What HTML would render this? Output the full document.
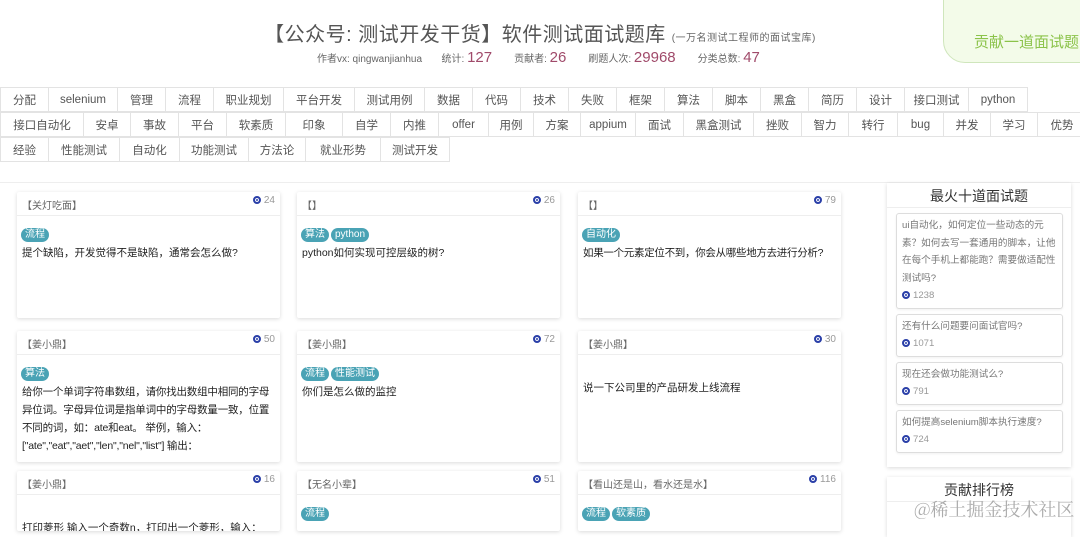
<!DOCTYPE html>
<html><head><meta charset="utf-8"><style>
*{margin:0;padding:0;box-sizing:border-box}
body{width:1080px;height:525px;overflow:hidden;background:#fff;font-family:"Liberation Sans","Noto Sans CJK SC",sans-serif;position:relative;color:#333}
.title{position:absolute;top:18px;left:0;width:1080px;text-align:center;font-size:20px;color:#555;letter-spacing:0.5px}
.title small{font-size:10px;color:#666;margin-left:6px}
.stats{position:absolute;top:49px;left:317px;font-size:10px;color:#666;white-space:nowrap}
.stats b{font-size:15px;color:#a04a6a;font-weight:normal;margin-right:22px}
.contrib{position:absolute;left:943px;top:-5px;width:150px;height:68px;background:#f3fbe9;border:1px solid #cfe6bc;border-radius:0 0 0 22px;color:#8bc34a;font-size:15px;padding:35px 0 0 30px}
.row{position:absolute;left:0;display:flex;height:25px}
.row div{border:1px solid #e3e3e3;margin-right:-1px;font-size:11.5px;color:#555;display:flex;align-items:center;justify-content:center;height:25px;white-space:nowrap;overflow:hidden;flex:none}
.line{position:absolute;left:0;top:182px;width:1080px;height:1px;background:#eee}
.card{position:absolute;width:263px;background:#fff;box-shadow:0 1px 4px rgba(0,0,0,0.15);border-radius:2px}
.card .h{height:24px;border-bottom:1px solid #eee;font-size:10px;color:#666;padding:5px 0 0 5px;position:relative}
.card .h span{position:absolute;right:5px;top:3px;color:#999;font-size:10px}
.eye{display:inline-block;width:8px;height:8px;border-radius:50%;background:#2a3fa8;border:2px solid #2a3fa8;box-shadow:inset 0 0 0 1px #fff;vertical-align:-1px;margin-right:3px}
.tags{margin:8px 0 0 4px;height:16px}
.tag{display:inline-block;background:#4aa3b5;color:#fff;font-size:10px;border-radius:8px;padding:0 4px;height:14px;line-height:14px;margin-right:2px;font-style:normal}
.q{font-size:10.5px;color:#222;padding:4px 5px;line-height:18px}
.side{position:absolute;left:887px;width:184px;background:#fff;box-shadow:0 1px 4px rgba(0,0,0,0.15);overflow:hidden}
.side .t{height:25px;text-align:center;font-size:14px;color:#333;border-bottom:1px solid #eee;padding-top:3px}
.it{margin:5px 8px 0 9px;border:1px solid #ddd;border-radius:3px;padding:3px 5px;font-size:9.6px;color:#777;line-height:17.5px;box-shadow:0 1px 2px rgba(0,0,0,0.06)}
.it .c{color:#999}
.wm{position:absolute;left:914px;top:496px;font-size:18px;color:rgba(150,150,150,0.8);font-family:"Noto Serif CJK SC",serif;white-space:nowrap}
</style></head><body>
<div class="title">【公众号: 测试开发干货】软件测试面试题库<small>(一万名测试工程师的面试宝库)</small></div>
<div class="stats">作者vx: qingwanjianhua &nbsp; &nbsp; &nbsp; 统计: <b>127</b>贡献者: <b>26</b>刷题人次: <b>29968</b>分类总数: <b>47</b></div>
<div class="contrib">贡献一道面试题</div>
<div class="row" style="top:87px">
<div style="width:49px">分配</div><div style="width:70px">selenium</div><div style="width:49px">管理</div><div style="width:49px">流程</div><div style="width:71px">职业规划</div><div style="width:72px">平台开发</div><div style="width:71px">测试用例</div><div style="width:49px">数据</div><div style="width:49px">代码</div><div style="width:49px">技术</div><div style="width:49px">失败</div><div style="width:49px">框架</div><div style="width:49px">算法</div><div style="width:49px">脚本</div><div style="width:49px">黑盒</div><div style="width:49px">简历</div><div style="width:49px">设计</div><div style="width:65px">接口测试</div><div style="width:60px">python</div></div>
<div class="row" style="top:112px">
<div style="width:84px">接口自动化</div><div style="width:48px">安卓</div><div style="width:49px">事故</div><div style="width:49px">平台</div><div style="width:60px">软素质</div><div style="width:58px">印象</div><div style="width:49px">自学</div><div style="width:49px">内推</div><div style="width:51px">offer</div><div style="width:46px">用例</div><div style="width:48px">方案</div><div style="width:56px">appium</div><div style="width:49px">面试</div><div style="width:71px">黑盒测试</div><div style="width:49px">挫败</div><div style="width:48px">智力</div><div style="width:50px">转行</div><div style="width:47px">bug</div><div style="width:48px">并发</div><div style="width:48px">学习</div><div style="width:50px">优势</div></div>
<div class="row" style="top:137px">
<div style="width:49px">经验</div><div style="width:72px">性能测试</div><div style="width:61px">自动化</div><div style="width:70px">功能测试</div><div style="width:58px">方法论</div><div style="width:76px">就业形势</div><div style="width:70px">测试开发</div></div>
<div class="line"></div>

<div class="card" style="left:17px;top:192px;height:126px"><div class="h">【关灯吃面】<span><i class="eye"></i>24</span></div><div class="tags"><span class="tag">流程</span></div><div class="q">提个缺陷，开发觉得不是缺陷，通常会怎么做?</div></div>
<div class="card" style="left:297px;top:192px;height:126px"><div class="h">【】<span><i class="eye"></i>26</span></div><div class="tags"><span class="tag">算法</span><span class="tag">python</span></div><div class="q">python如何实现可控层级的树?</div></div>
<div class="card" style="left:578px;top:192px;height:126px"><div class="h">【】<span><i class="eye"></i>79</span></div><div class="tags"><span class="tag">自动化</span></div><div class="q" style="letter-spacing:-0.3px;white-space:nowrap">如果一个元素定位不到，你会从哪些地方去进行分析?</div></div>

<div class="card" style="left:17px;top:331px;height:131px;overflow:hidden"><div class="h">【姜小鼎】<span><i class="eye"></i>50</span></div><div class="tags"><span class="tag">算法</span></div><div class="q" style="letter-spacing:-0.2px">给你一个单词字符串数组，请你找出数组中相同的字母异位词。字母异位词是指单词中的字母数量一致，位置不同的词，如：ate和eat。 举例，输入：["ate","eat","aet","len","nel","list"] 输出：</div></div>
<div class="card" style="left:297px;top:331px;height:131px"><div class="h">【姜小鼎】<span><i class="eye"></i>72</span></div><div class="tags"><span class="tag">流程</span><span class="tag">性能测试</span></div><div class="q">你们是怎么做的监控</div></div>
<div class="card" style="left:578px;top:331px;height:131px"><div class="h">【姜小鼎】<span><i class="eye"></i>30</span></div><div class="q" style="margin-top:20px">说一下公司里的产品研发上线流程</div></div>

<div class="card" style="left:17px;top:471px;height:60px;overflow:hidden"><div class="h">【姜小鼎】<span><i class="eye"></i>16</span></div><div class="q" style="margin-top:20px">打印菱形 输入一个奇数n，打印出一个菱形，输入：</div></div>
<div class="card" style="left:297px;top:471px;height:60px"><div class="h">【无名小辈】<span><i class="eye"></i>51</span></div><div class="tags"><span class="tag">流程</span></div></div>
<div class="card" style="left:578px;top:471px;height:60px"><div class="h">【看山还是山，看水还是水】<span><i class="eye"></i>116</span></div><div class="tags"><span class="tag">流程</span><span class="tag">软素质</span></div></div>

<div class="side" style="top:183px;height:284px"><div class="t">最火十道面试题</div>
<div class="it">ui自动化，如何定位一些动态的元素？如何去写一套通用的脚本，让他在每个手机上都能跑？需要做适配性测试吗?<div class="c"><i class="eye"></i>1238</div></div>
<div class="it">还有什么问题要问面试官吗?<div class="c"><i class="eye"></i>1071</div></div>
<div class="it">现在还会做功能测试么?<div class="c"><i class="eye"></i>791</div></div>
<div class="it">如何提高selenium脚本执行速度?<div class="c"><i class="eye"></i>724</div></div>
</div>
<div class="side" style="top:477px;height:60px"><div class="t">贡献排行榜</div></div>
<div class="wm">@稀土掘金技术社区</div>
</body></html>
